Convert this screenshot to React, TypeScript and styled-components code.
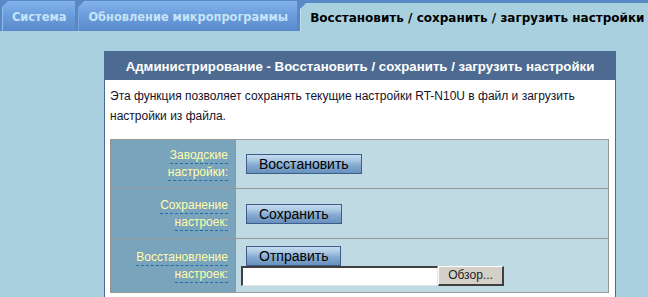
import styled, { createGlobalStyle } from "styled-components";

const GlobalStyle = createGlobalStyle`
  html, body {
    margin: 0;
    padding: 0;
    background: #a9d0df;
    overflow: hidden;
  }
`;

const Page = styled.div`
  width: 648px;
  height: 297px;
  display: flex;
  flex-direction: column;
  background: #a9d0df;
`;

const TabBar = styled.div`
  height: 31px;
  flex: none;
  display: flex;
  align-items: flex-end;
  gap: 3px;
  padding-left: 2px;
  background: #5a87c6;
  overflow: hidden;
`;

const Tab = styled.div<{ $active?: boolean }>`
  height: ${(p) => (p.$active ? "28px" : "30px")};
  display: flex;
  align-items: center;
  padding: ${(p) => (p.$active ? "2px 0 0 9px" : "2px 9px 0 9px")};
  box-sizing: border-box;
  white-space: nowrap;
  font-family: "DejaVu Sans", Verdana, sans-serif;
  font-weight: bold;
  font-size: ${(p) => (p.$active ? "12px" : "11.4px")};
  color: ${(p) => (p.$active ? "#000" : "#c6e4f8")};
  background: ${(p) =>
    p.$active
      ? "#a9d0df"
      : "linear-gradient(to bottom, #82b3ea 0%, #6c9edd 45%, #5a8acb 100%)"};
  border-left: 1px solid ${(p) => (p.$active ? "#c9e3ec" : "#8fbcec")};
  clip-path: polygon(6px 0, 100% 0, 100% 100%, 0 100%, 0 6px);
  flex: ${(p) => (p.$active ? "1" : "none")};
`;

const Main = styled.div`
  flex: 1;
  display: flex;
  padding: 20px 0 0 104px;
  min-height: 0;
`;

const Panel = styled.div`
  width: 510px;
  border: 1px solid #4c6b92;
  border-bottom: none;
  background: #fff;
  display: flex;
  flex-direction: column;
`;

const PanelHeader = styled.div`
  height: 28px;
  background: #4d6b91;
  color: #fff;
  font-family: "Liberation Sans", Arial, sans-serif;
  font-weight: bold;
  font-size: 13.25px;
  display: flex;
  align-items: center;
  justify-content: center;
`;

const Intro = styled.p`
  margin: 6px 0 13px;
  padding: 0 5px;
  font-family: "Liberation Sans", Arial, sans-serif;
  font-size: 12px;
  line-height: 20px;
  color: #14102a;
`;

const FormTable = styled.div`
  margin: 0 6px 0 5px;
  border: 1px solid #979797;
  display: grid;
  grid-template-columns: 125px 1fr;
`;

const Row = styled.div<{ $h: number; $last?: boolean }>`
  display: contents;

  & > * {
    height: ${(p) => p.$h}px;
    border-bottom: ${(p) => (p.$last ? "none" : "1px solid #979797")};
  }
`;

const LabelCell = styled.div`
  background: #7aa3bc;
  border-right: 1px solid #979797;
  display: flex;
  flex-direction: column;
  align-items: flex-end;
  justify-content: center;
  padding-right: 7px;
  font-family: "Liberation Sans", Arial, sans-serif;
  font-size: 12px;
  line-height: 17px;
`;

const Hint = styled.span`
  color: #ffffa8;
  border-bottom: 1px dashed #2170a8;
  line-height: 15px;
  margin-top: 1px;
`;

const FieldCell = styled.div`
  background: #c0dae4;
  display: flex;
  flex-direction: column;
  align-items: flex-start;
  justify-content: center;
  padding-left: 5px;
`;

const ActionButton = styled.button`
  height: 20px;
  margin-left: 5px;
  padding: 0 12px;
  border: 1px solid #3b5e8a;
  background: linear-gradient(
    to bottom,
    #c6dcef 0%,
    #a9c7e3 30%,
    #86abd1 55%,
    #6891bd 100%
  );
  font-family: "Liberation Sans", Arial, sans-serif;
  font-size: 14px;
  line-height: 18px;
  color: #000;
  cursor: pointer;
`;

const FilePicker = styled.div`
  display: flex;
  height: 20px;
`;

const FileField = styled.input.attrs({ type: "text" })`
  width: 197px;
  height: 20px;
  box-sizing: border-box;
  margin: 0;
  border-style: solid;
  border-width: 2px 1px 1px 2px;
  border-color: #404040 #e4e4e4 #e4e4e4 #404040;
  background: #fff;
`;

const BrowseButton = styled.button`
  width: 66px;
  height: 20px;
  box-sizing: border-box;
  margin: 0;
  padding: 0;
  background: #d4d0c8;
  border-style: solid;
  border-width: 1px 2px 2px 1px;
  border-color: #fff #404040 #404040 #fff;
  font-family: "Liberation Sans", Arial, sans-serif;
  font-size: 12px;
  color: #222;
`;

export default function App() {
  return (
    <>
      <GlobalStyle />
      <Page>
        <TabBar>
          <Tab>Система</Tab>
          <Tab>Обновление микропрограммы</Tab>
          <Tab $active>Восстановить / сохранить / загрузить настройки</Tab>
        </TabBar>
        <Main>
          <Panel>
            <PanelHeader>
              Администрирование - Восстановить / сохранить / загрузить настройки
            </PanelHeader>
            <Intro>
              Эта функция позволяет сохранять текущие настройки RT-N10U в файл и
              загрузить настройки из файла.
            </Intro>
            <FormTable>
              <Row $h={48}>
                <LabelCell>
                  <Hint>Заводские</Hint>
                  <Hint>настройки:</Hint>
                </LabelCell>
                <FieldCell>
                  <ActionButton>Восстановить</ActionButton>
                </FieldCell>
              </Row>
              <Row $h={49}>
                <LabelCell>
                  <Hint>Сохранение</Hint>
                  <Hint>настроек:</Hint>
                </LabelCell>
                <FieldCell>
                  <ActionButton>Сохранить</ActionButton>
                </FieldCell>
              </Row>
              <Row $h={53} $last>
                <LabelCell>
                  <Hint>Восстановление</Hint>
                  <Hint>настроек:</Hint>
                </LabelCell>
                <FieldCell>
                  <ActionButton>Отправить</ActionButton>
                  <FilePicker>
                    <FileField />
                    <BrowseButton>Обзор...</BrowseButton>
                  </FilePicker>
                </FieldCell>
              </Row>
            </FormTable>
          </Panel>
        </Main>
      </Page>
    </>
  );
}
